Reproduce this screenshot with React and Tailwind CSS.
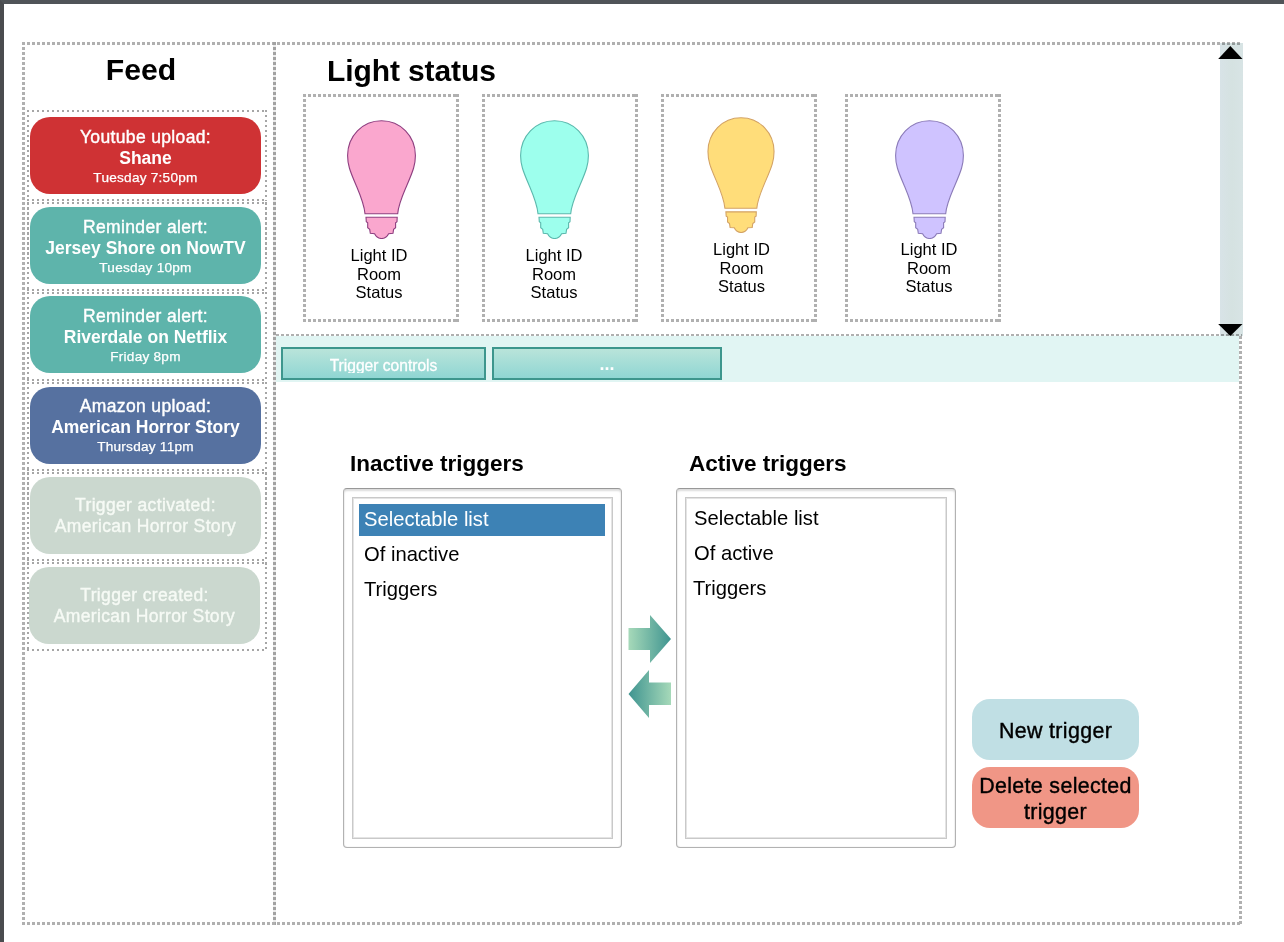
const MEDIUM = "[-webkit-text-stroke:0.4px_currentColor] tracking-[0.35px]";

// A box outlined with square dots on all four sides.
const DOTTED_THIN =
  "[background-image:repeating-linear-gradient(90deg,#a6a6a6_0_2.5px,transparent_2.5px_5px),repeating-linear-gradient(90deg,#a6a6a6_0_2.5px,transparent_2.5px_5px),repeating-linear-gradient(180deg,#a6a6a6_0_2.5px,transparent_2.5px_5px),repeating-linear-gradient(180deg,#a6a6a6_0_2.5px,transparent_2.5px_5px)] [background-size:100%_2px,100%_2px,2px_100%,2px_100%] [background-position:0_0,0_100%,0_0,100%_0] bg-no-repeat";

const DOTTED =
  "[background-image:repeating-linear-gradient(90deg,#b0b0b0_0_2.7px,transparent_2.7px_5px),repeating-linear-gradient(90deg,#b0b0b0_0_2.7px,transparent_2.7px_5px),repeating-linear-gradient(180deg,#b0b0b0_0_2.7px,transparent_2.7px_5px),repeating-linear-gradient(180deg,#b0b0b0_0_2.7px,transparent_2.7px_5px)] [background-size:100%_3px,100%_3px,3px_100%,3px_100%] [background-position:0_0,0_100%,0_0,100%_0] bg-no-repeat";

const DOTS_X = "bg-[repeating-linear-gradient(90deg,#b0b0b0_0_2.7px,transparent_2.7px_5px)]";
const DOTS_Y = "bg-[repeating-linear-gradient(180deg,#b0b0b0_0_2.7px,transparent_2.7px_5px)]";

const feed = [
  { kind: "Youtube upload:", title: "Shane", time: "Tuesday 7:50pm", row: "h-[91px] pt-[7px] pl-[3px]", pill: "bg-[#cf3234] text-white pt-[10px]" },
  { kind: "Reminder alert:", title: "Jersey Shore on NowTV", time: "Tuesday 10pm", row: "mt-px h-[89px] pt-[5px] pl-[3px]", pill: "bg-[#5eb4ab] text-white pt-[10px]" },
  { kind: "Reminder alert:", title: "Riverdale on Netflix", time: "Friday 8pm", row: "mt-px h-[89px] pt-[4px] pl-[3px]", pill: "bg-[#5eb4ab] text-white pt-[10px]" },
  { kind: "Amazon upload:", title: "American Horror Story", time: "Thursday 11pm", row: "mt-px h-[89px] pt-[5px] pl-[3px]", pill: "bg-[#5671a0] text-white pt-[9px]" },
  { kind: "Trigger activated:", title: "American Horror Story", row: "mt-px h-[89px] pt-[5px] pl-[3px]", pill: "bg-[#cbd8cf] text-[#f6faf5] pt-[18px]" },
  { kind: "Trigger created:", title: "American Horror Story", row: "mt-px h-[89px] pt-[5px] pl-[2px]", pill: "bg-[#cbd8cf] text-[#f6faf5] pt-[18px]" },
];

const lights = [
  { fill: "#faa7ce", stroke: "#8e3f80", gap: "", pad: "pt-[26px]", bulb: "w-[69px] h-[119px]", shift: "ml-0", text: "mr-[4px] mt-[1px]" },
  { fill: "#9dffed", stroke: "#5bb9ad", gap: "ml-[23px]", pad: "pt-[26px]", bulb: "w-[69px] h-[119px]", shift: "mr-[12px]", text: "mr-[12px] mt-[1px]" },
  { fill: "#ffdd7a", stroke: "#d3a264", gap: "ml-[23px]", pad: "pt-[23px]", bulb: "w-[68px] h-[116px]", shift: "ml-[4px]", text: "ml-[5px] mt-[1px]" },
  { fill: "#cfc3ff", stroke: "#8b7bb8", gap: "ml-[28px]", pad: "pt-[26px]", bulb: "w-[69px] h-[119px]", shift: "ml-[12px]", text: "ml-[12px] -mt-[5px]" },
];

function Bulb({ fill, stroke, className }) {
  return (
    <svg viewBox="0 0 69 119" className={className} fill={fill} stroke={stroke} strokeWidth="1.1">
      <path d="M18 93.7 H50.7 C51.5 84 56 74.5 60 65 C63 58 65.500 52 66.600 48 C67.800 44 68.400 40 68.400 35.500 C68.400 16 53.500 0.700 34.500 0.700 C15.500 0.700 0.600 16 0.600 35.500 C0.600 40 1.200 44 2.400 48 C3.500 52 6 58 9 65 C13 74.500 17.200 84 18 93.700 Z" />
      <path d="M19 97.300 H50.200 L50 101.700 L48.600 102.700 V107.700 L46.600 109.300 L46 113.300 L41.600 113.700 C40 117 38 118.500 34.600 118.500 C31.200 118.500 29.200 117 27.600 113.700 L23.300 113.300 L22.700 109.300 L20.700 107.700 V102.700 L19.300 101.700 Z" />
    </svg>
  );
}

function LightCard({ light }) {
  return (
    <div className={`flex h-[228px] w-[156px] shrink-0 flex-col items-center ${DOTTED} ${light.gap} ${light.pad}`}>
      <div className={`flex ${light.shift}`}>
        <Bulb fill={light.fill} stroke={light.stroke} className={`block ${light.bulb}`} />
      </div>
      <div className={`pt-[6px] text-center text-[16.5px] leading-[18.5px] ${light.text}`}>
        <div>Light ID</div>
        <div>Room</div>
        <div>Status</div>
      </div>
    </div>
  );
}

function TriggerList({ title, titleClass, items, panelClass, innerClass, selected }) {
  return (
    <section className={panelClass}>
      <h2 className={`h-[40px] pt-px text-[22.5px] leading-[30px] font-bold whitespace-nowrap ${titleClass}`}>{title}</h2>
      <div className="h-[360px] rounded-[4px] border border-[#b2b2b2] border-t-[#989898] px-[8px] pt-[8px] pb-[8px] shadow-[inset_0_2px_2px_#dcdcdc,inset_0_0_1px_#c4c4c4]">
        <ul className={`h-full border border-[#c9c9c9] text-[20.2px] shadow-[inset_0_0_0_1px_#e4e4e4] ${innerClass}`}>
          {items.map((item, i) => (
            <li
              key={item}
              className={`mb-[3px] h-[32px] leading-[31px] ${i === selected ? "bg-[#3d82b5] text-white" : ""} ${item === "Triggers" && selected < 0 ? "pl-[4px]" : "pl-[5px]"}`}
            >
              {item}
            </li>
          ))}
        </ul>
      </div>
    </section>
  );
}

function Arrows() {
  return (
    <div className="flex w-[54px] flex-col items-center gap-[7px] pt-[167px]">
      <svg viewBox="0 0 43 48" className="ml-[1px] block h-[48px] w-[43px]">
        <defs>
          <linearGradient id="toRight" x1="0" y1="0" x2="1" y2="0">
            <stop offset="0" stopColor="#a6d9b9" />
            <stop offset="1" stopColor="#3f9490" />
          </linearGradient>
        </defs>
        <path d="M0.500 13 H22 V0 L43 24 L22 48 V35 H0.500 Z" fill="url(#toRight)" />
      </svg>
      <svg viewBox="0 0 43 48" className="ml-[1px] block h-[48px] w-[43px]">
        <defs>
          <linearGradient id="toLeft" x1="1" y1="0" x2="0" y2="0">
            <stop offset="0" stopColor="#a6d9b9" />
            <stop offset="1" stopColor="#3f9490" />
          </linearGradient>
        </defs>
        <path d="M43 12.500 H21 V0 L0.500 24 L21 48 V35 H43 Z" fill="url(#toLeft)" />
      </svg>
    </div>
  );
}

function Feed() {
  return (
    <aside className="w-[251px] shrink-0">
      <h1 className="h-[68px] pt-[10px] pr-[13px] text-center text-[30.2px] leading-[36px] font-bold">Feed</h1>
      <div className="ml-[5px] w-[240px]">
        {feed.map((item) => (
          <div key={item.kind + item.title} className={`${DOTTED_THIN} ${item.row}`}>
            <div className={`h-[77px] w-[231px] rounded-[20px] text-center text-[17.5px] leading-[21px] whitespace-nowrap ${item.pill}`}>
              <div className={MEDIUM}>{item.kind}</div>
              <div className={item.time ? "font-bold" : MEDIUM}>{item.title}</div>
              {item.time && (
                <div className="text-[13.6px] leading-[17px] tracking-[0.25px] [-webkit-text-stroke:0.25px_currentColor]">{item.time}</div>
              )}
            </div>
          </div>
        ))}
      </div>
    </aside>
  );
}

function LightStatus() {
  return (
    <section className="flex h-[292px] justify-between">
      <div>
        <h1 className="h-[52px] pt-[11px] pl-[51px] text-[30px] leading-[36px] font-bold tracking-[-0.1px]">Light status</h1>
        <div className="flex pl-[27px]">
          {lights.map((light) => (
            <LightCard key={light.fill} light={light} />
          ))}
        </div>
      </div>
      <div className="-mr-px mt-px flex h-[293px] w-[25px] flex-col items-center justify-between bg-[linear-gradient(90deg,transparent_2px,#d8e3e7_2px,#d5e2e1_14px,#d8e4e5)] pt-[3px] mix-blend-multiply">
        <svg viewBox="0 0 25 13" className="block h-[13px] w-[25px]">
          <path d="M12.300 0 L24.500 13 H0.200 Z" fill="#000" />
        </svg>
        <svg viewBox="0 0 25 13" className="block h-[13px] w-[25px]">
          <path d="M0.200 1 H24.500 L12.300 13 Z" fill="#000" />
        </svg>
      </div>
    </section>
  );
}

function Tabs() {
  const tab =
    "flex h-[33px] justify-center border-2 border-[#3d968d] bg-linear-to-b from-[#b9e4da] to-[#8fd6d3] text-white";
  return (
    <nav className="flex h-[46px] gap-[6px] bg-[#e1f5f3] pt-[11px] pl-[5px]">
      <button className={`${tab} w-[205px]`}>
        <span className="mt-[7px] h-[17px] overflow-hidden text-[15.6px] leading-[20px] [-webkit-text-stroke:0.3px_currentColor]">
          Trigger controls
        </span>
      </button>
      <button className={`${tab} w-[230px]`}>
        <span className="mt-[5px] text-[18px] leading-[20px] font-bold">...</span>
      </button>
    </nav>
  );
}

export default function App() {
  return (
    <div className="h-[942px] w-[1284px] overflow-hidden border-t-4 border-l-4 border-t-[#505458] border-l-[#4a4c4f] bg-white pt-[38px] pl-[18px] font-['Liberation_Sans',Arial,sans-serif] text-black">
      <div className="flex h-[883px] w-[1220px] flex-col">
        <div className={`h-[3px] shrink-0 ${DOTS_X}`} />
        <div className="-mt-[3px] flex h-[883px] shrink-0">
          <div className={`-mr-[3px] w-[3px] shrink-0 ${DOTS_Y}`} />
          <Feed />
          <div className="w-[3px] shrink-0 bg-[repeating-linear-gradient(180deg,#a2a2a2_0_3.3px,#ebebeb_3.3px_5px)]" />
          <div className="flex w-[966px] shrink-0 flex-col">
            <LightStatus />
            <div className={`h-[2px] shrink-0 ${DOTS_X}`} />
            <div className="flex h-[589px]">
              <div className="w-[963px]">
                <Tabs />
                <main className="flex pt-[66px] pl-[67px]">
                  <TriggerList
                    title="Inactive triggers"
                    titleClass="pl-[7px]"
                    panelClass="w-[279px]"
                    innerClass="pr-[7px] pl-[6px] pt-[6px]"
                    items={["Selectable list", "Of inactive", "Triggers"]}
                    selected={0}
                  />
                  <Arrows />
                  <TriggerList
                    title="Active triggers"
                    titleClass="pl-[13px]"
                    panelClass="w-[280px]"
                    innerClass="px-[3px] pt-[5px]"
                    items={["Selectable list", "Of active", "Triggers"]}
                    selected={-1}
                  />
                  <div className={`ml-[16px] flex w-[167px] flex-col gap-[7px] pt-[251px] text-[21.4px] leading-[26px] ${MEDIUM}`}>
                    <button className="h-[61px] rounded-[18px] bg-[#c0dfe4] pt-[3px]">New trigger</button>
                    <button className="h-[61px] rounded-[18px] bg-[#f09686] pt-[2px]">
                      <span className="block whitespace-nowrap">Delete selected</span>
                      <span className="block">trigger</span>
                    </button>
                  </div>
                </main>
              </div>
              <div className={`w-[3px] ${DOTS_Y}`} />
            </div>
          </div>
        </div>
        <div className={`-mt-[3px] h-[3px] shrink-0 ${DOTS_X}`} />
      </div>
    </div>
  );
}
